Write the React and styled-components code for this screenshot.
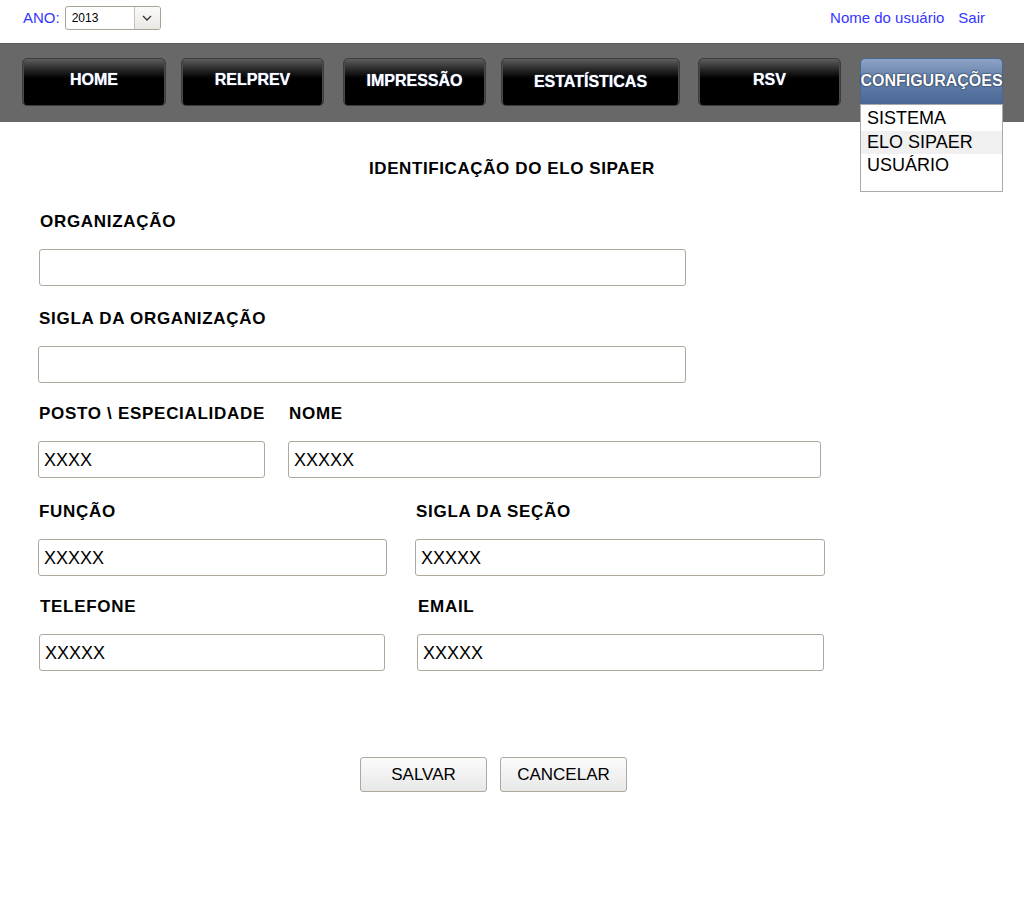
import styled, { createGlobalStyle } from "styled-components";

const GlobalStyle = createGlobalStyle`
  body {
    margin: 0;
    background: #fff;
    font-family: "Liberation Sans", Arial, sans-serif;
    color: #000;
  }
`;

const TopBar = styled.header`
  height: 35px;
  display: flex;
  align-items: center;
  justify-content: space-between;
  padding: 0 39px 8px 23px;
  font-size: 15px;
  color: #3636ff;
`;

const YearPicker = styled.div`
  display: flex;
  align-items: center;
  gap: 5px;
`;

const Select = styled.div`
  display: flex;
  width: 94px;
  height: 22px;
  border: 1px solid #a9a296;
  border-radius: 3px;
  background: #fff;
  font-size: 12px;
  color: #000;
  overflow: hidden;

  span {
    flex: 1;
    padding-left: 6px;
    line-height: 22px;
  }
`;

const SelectArrow = styled.div`
  width: 25px;
  border-left: 1px solid #c8c2b6;
  background: linear-gradient(#fbfbfa, #e9e7e2);
  display: flex;
  align-items: center;
  justify-content: center;
`;

const UserLinks = styled.div`
  display: flex;
  gap: 14px;
`;

const NavBar = styled.nav`
  position: relative;
  height: 79px;
  background: #686868;
  border-top: 1px solid #5a5a5a;
  box-sizing: border-box;
  display: flex;
  padding: 14px 0 0 22px;
`;

const NavButton = styled.div`
  width: ${(p) => p.$w}px;
  height: 48px;
  margin-right: ${(p) => p.$gap}px;
  box-sizing: border-box;
  border: 1px solid #3c3c3c;
  border-radius: 5px;
  background: linear-gradient(#5e5e5e 0%, #2a2a2a 22%, #000 42%, #000 100%);
  box-shadow: inset 4px 0 0 -3px #4a4a4a, inset -4px 0 0 -3px #4a4a4a;
  display: flex;
  align-items: center;
  justify-content: center;
  padding-bottom: ${(p) => p.$lift}px;
  color: #fff;
  font-weight: bold;
  font-size: 16px;
  text-shadow: 0 0 1px #9ec3ff;
`;

const ConfigButton = styled(NavButton)`
  height: 46px;
  border: 1px solid #4c6690;
  border-radius: 5px 5px 0 0;
  background: linear-gradient(#8ea4c6 0%, #6883ad 40%, #4b6997 100%);
  box-shadow: none;
  text-shadow: 0 0 2px #1c2a44, 0 0 1px #1c2a44;
`;

const Dropdown = styled.ul`
  position: absolute;
  top: 60px;
  left: 860px;
  width: 143px;
  height: 88px;
  margin: 0;
  padding: 2px 0 0;
  list-style: none;
  box-sizing: border-box;
  background: #fff;
  border: 1px solid #aaa;
  font-size: 18px;
`;

const DropdownItem = styled.li`
  height: 23.5px;
  line-height: 23px;
  padding-left: 6px;
  background: ${(p) => (p.$active ? "#f0f0f0" : "transparent")};
`;

const Form = styled.main`
  display: flex;
  flex-direction: column;
  padding: 37px 0 0;
`;

const Title = styled.h1`
  margin: 0 0 33px;
  text-align: center;
  font-size: 17px;
  line-height: 20px;
  font-weight: bold;
  letter-spacing: 0.6px;
`;

const Row = styled.div`
  display: flex;
  gap: ${(p) => p.$gap || 0}px;
  padding-left: ${(p) => p.$left || 38}px;
  margin-bottom: ${(p) => p.$mb ?? 23}px;
`;

const Field = styled.div`
  display: flex;
  flex-direction: column;
  gap: 17px;
  width: ${(p) => p.$w}px;
`;

const Label = styled.label`
  font-size: 17px;
  line-height: 20px;
  font-weight: bold;
  letter-spacing: 0.7px;
  padding-left: 1px;
  white-space: nowrap;
`;

const Input = styled.input`
  height: 37px;
  box-sizing: border-box;
  border: 1px solid #aea89d;
  border-radius: 3px;
  padding: 2px 5px 0;
  font-family: "Liberation Sans", Arial, sans-serif;
  font-size: 18px;
  color: #000;
  background: #fff;
  outline: none;
`;

const Actions = styled.div`
  display: flex;
  gap: 13px;
  padding-left: 360px;
  margin-top: 86px;
`;

const Button = styled.button`
  width: 127px;
  height: 35px;
  border: 1px solid #aea89d;
  border-radius: 3px;
  background: linear-gradient(#fbfbfb, #e8e8e8);
  font-family: "Liberation Sans", Arial, sans-serif;
  font-size: 17px;
  color: #000;
`;

const navItems = [
  { label: "HOME", w: 144, gap: 15, lift: 4 },
  { label: "RELPREV", w: 143, gap: 19, lift: 4 },
  { label: "IMPRESSÃO", w: 143, gap: 15, lift: 2 },
  { label: "ESTATÍSTICAS", w: 179, gap: 18, lift: 0 },
  { label: "RSV", w: 143, gap: 19, lift: 4 },
];

export default function App() {
  return (
    <>
      <GlobalStyle />
      <TopBar>
        <YearPicker>
          <span>ANO:</span>
          <Select>
            <span>2013</span>
            <SelectArrow>
              <svg width="10" height="6" viewBox="0 0 10 6">
                <path d="M1 1l4 4 4-4" fill="none" stroke="#333" strokeWidth="1.3" />
              </svg>
            </SelectArrow>
          </Select>
        </YearPicker>
        <UserLinks>
          <span>Nome do usuário</span>
          <span>Sair</span>
        </UserLinks>
      </TopBar>

      <NavBar>
        {navItems.map((item) => (
          <NavButton key={item.label} $w={item.w} $gap={item.gap} $lift={item.lift}>
            {item.label}
          </NavButton>
        ))}
        <ConfigButton $w={143} $gap={0} $lift={0}>
          CONFIGURAÇÕES
        </ConfigButton>
        <Dropdown>
          <DropdownItem>SISTEMA</DropdownItem>
          <DropdownItem $active>ELO SIPAER</DropdownItem>
          <DropdownItem>USUÁRIO</DropdownItem>
        </Dropdown>
      </NavBar>

      <Form>
        <Title>IDENTIFICAÇÃO DO ELO SIPAER</Title>

        <Row $left={39} $mb={23}>
          <Field $w={647}>
            <Label>ORGANIZAÇÃO</Label>
            <Input />
          </Field>
        </Row>

        <Row $mb={21}>
          <Field $w={648}>
            <Label>SIGLA DA ORGANIZAÇÃO</Label>
            <Input />
          </Field>
        </Row>

        <Row $gap={23} $mb={24}>
          <Field $w={227}>
            <Label>POSTO \ ESPECIALIDADE</Label>
            <Input defaultValue="XXXX" />
          </Field>
          <Field $w={533}>
            <Label>NOME</Label>
            <Input defaultValue="XXXXX" />
          </Field>
        </Row>

        <Row $gap={28} $mb={21}>
          <Field $w={349}>
            <Label>FUNÇÃO</Label>
            <Input defaultValue="XXXXX" />
          </Field>
          <Field $w={410}>
            <Label>SIGLA DA SEÇÃO</Label>
            <Input defaultValue="XXXXX" />
          </Field>
        </Row>

        <Row $left={39} $gap={32} $mb={0}>
          <Field $w={346}>
            <Label>TELEFONE</Label>
            <Input defaultValue="XXXXX" />
          </Field>
          <Field $w={407}>
            <Label>EMAIL</Label>
            <Input defaultValue="XXXXX" />
          </Field>
        </Row>

        <Actions>
          <Button>SALVAR</Button>
          <Button>CANCELAR</Button>
        </Actions>
      </Form>
    </>
  );
}
